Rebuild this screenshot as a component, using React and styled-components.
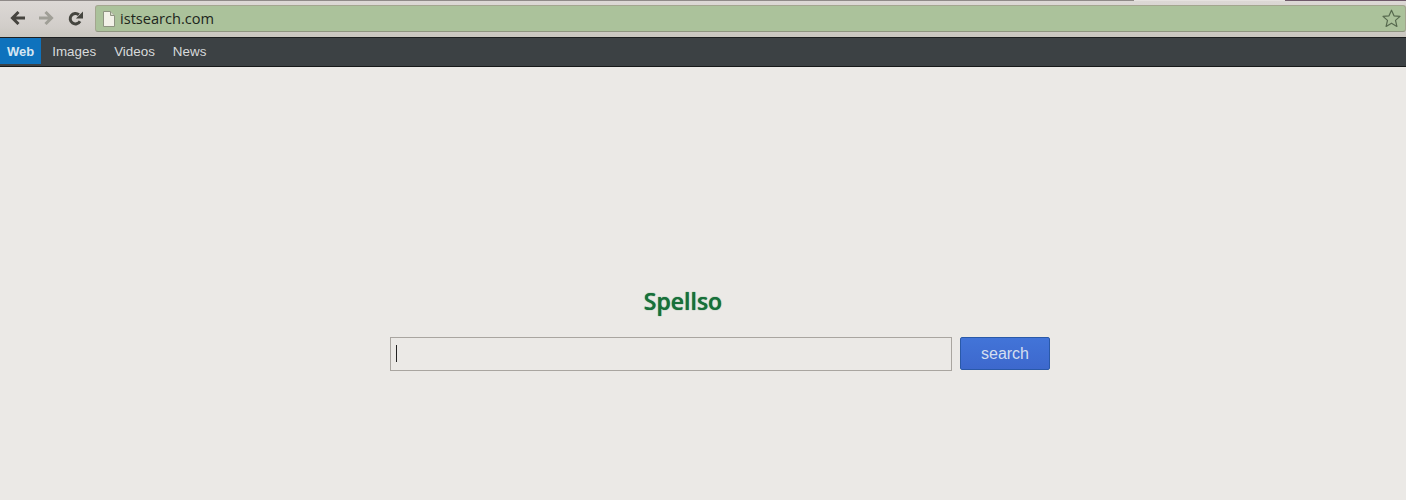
import styled, { createGlobalStyle } from "styled-components";

const Global = createGlobalStyle`
  html, body {
    margin: 0;
    padding: 0;
    background: #ebe9e6;
  }
`;

const Page = styled.div`
  width: 1406px;
  height: 500px;
  overflow: hidden;
  display: flex;
  flex-direction: column;
  font-family: "Liberation Sans", Arial, sans-serif;
`;

const TabEdge = styled.div`
  height: 1px;
  flex-shrink: 0;
  display: flex;
`;

const TabPiece = styled.div`
  width: ${(p) => (p.$width ? `${p.$width}px` : "auto")};
  flex: ${(p) => (p.$width ? "none" : "1")};
  background: ${(p) => p.$color};
`;

const Toolbar = styled.div`
  height: 36px;
  box-sizing: border-box;
  padding: 4px 0 5px 10px;
  display: flex;
  align-items: stretch;
  background: linear-gradient(#dcd8d5, #d2ceca 70%, #c9c6bf);
`;

const NavIcons = styled.div`
  display: flex;
  align-items: center;
  gap: 14px;
  width: 85px;
  flex-shrink: 0;
  padding-bottom: 1px;
  box-sizing: border-box;
`;

const AddressBar = styled.div`
  flex: 1;
  display: flex;
  align-items: center;
  padding: 0 4px 0 7px;
  background: #abc29b;
  border: 1px solid #a3a68f;
  border-bottom-color: #8f9580;
  border-radius: 3px;
`;

const UrlText = styled.span`
  margin-left: 5px;
  margin-bottom: 2px;
  flex: 1;
  font-family: "Open Sans", sans-serif;
  font-size: 14.6px;
  color: #20261c;
`;

const NavBar = styled.nav`
  height: 30px;
  box-sizing: border-box;
  display: flex;
  padding-bottom: 2px;
  background: #3c4144;
  border-top: 1px solid #1c1e20;
  border-bottom: 1px solid #17191a;
`;

const NavItem = styled.a`
  display: flex;
  align-items: center;
  padding: ${(p) => (p.$active ? "0 7px" : "0 9px")};
  margin-right: ${(p) => (p.$active ? "2px" : "0")};
  background: ${(p) => (p.$active ? "#0e72bd" : "transparent")};
  color: ${(p) => (p.$active ? "#d6e6f2" : "#d8dadb")};
  font-size: ${(p) => (p.$active ? "13px" : "13.4px")};
  font-weight: ${(p) => (p.$active ? "bold" : "normal")};
`;

const Main = styled.main`
  flex: 1;
  display: flex;
  flex-direction: column;
  align-items: flex-start;
  padding: 219px 0 0 390px;
`;

const Logo = styled.div`
  width: 586px;
  text-align: center;
  font-family: "Open Sans", sans-serif;
  font-size: 23px;
  font-weight: 600;
  line-height: 30px;
  color: #17703a;
  text-shadow: 0 0 1px #17703a;
  margin-bottom: 21px;
`;

const SearchRow = styled.form`
  display: flex;
  gap: 8px;
`;

const SearchField = styled.div`
  width: 562px;
  height: 34px;
  box-sizing: border-box;
  border: 1px solid #a9a5a0;
  padding: 7px 5px;
  background: #ebe9e6;
`;

const Caret = styled.div`
  width: 1px;
  height: 17px;
  background: #222;
`;

const SearchButton = styled.button`
  width: 90px;
  height: 33px;
  box-sizing: border-box;
  border: 1px solid #2a59a8;
  border-radius: 2px;
  background: linear-gradient(#4274d8, #3d68cd);
  color: #d5dff0;
  font-family: "Liberation Sans", Arial, sans-serif;
  font-size: 16px;
`;

function BackIcon() {
  return (
    <svg width="15" height="14" viewBox="0 0 15 14" fill="none" stroke="#46443f" strokeWidth="3">
      <path d="M15 7H3M8.5 1 2.5 7l6 6" />
    </svg>
  );
}

function ForwardIcon() {
  return (
    <svg width="15" height="14" viewBox="0 0 15 14" fill="none" stroke="#a09f97" strokeWidth="3">
      <path d="M0 7h12M6.5 1l6 6-6 6" />
    </svg>
  );
}

function ReloadIcon() {
  return (
    <svg width="15" height="15" viewBox="0 0 16 16" fill="none">
      <path d="M12.8 11A5.6 5.6 0 1 1 11.6 4" stroke="#45453f" strokeWidth="3.2" />
      <path d="M16 .5v7.6H8.4z" fill="#45453f" />
    </svg>
  );
}

function PageIcon() {
  return (
    <svg width="12" height="16" viewBox="0 0 12 16">
      <path d="M.5.5h7l4 4v11H.5z" fill="#f2f1e8" stroke="#8e9481" />
      <path d="M7.5.5v4h4" fill="#d5d8c9" stroke="#8e9481" />
    </svg>
  );
}

function StarIcon() {
  return (
    <svg width="19" height="19" viewBox="0 0 19 19" fill="none" stroke="#56694e" strokeWidth="1.2" strokeLinejoin="round">
      <path d="M9.5 1.2 12 6.8l6 .6-4.5 4 1.4 6-5.4-3.2-5.4 3.2 1.4-6L1 7.4l6-.6z" />
    </svg>
  );
}

export default function App() {
  return (
    <Page>
      <Global />
      <TabEdge>
        <TabPiece $width={1134} $color="#8f8a88" />
        <TabPiece $width={151} $color="#e6e2e0" />
        <TabPiece $color="#6f5a6a" />
      </TabEdge>
      <Toolbar>
        <NavIcons>
          <BackIcon />
          <ForwardIcon />
          <ReloadIcon />
        </NavIcons>
        <AddressBar>
          <PageIcon />
          <UrlText>istsearch.com</UrlText>
          <StarIcon />
        </AddressBar>
      </Toolbar>
      <NavBar>
        <NavItem $active>Web</NavItem>
        <NavItem>Images</NavItem>
        <NavItem>Videos</NavItem>
        <NavItem>News</NavItem>
      </NavBar>
      <Main>
        <Logo>Spellso</Logo>
        <SearchRow>
          <SearchField>
            <Caret />
          </SearchField>
          <SearchButton type="button">search</SearchButton>
        </SearchRow>
      </Main>
    </Page>
  );
}
